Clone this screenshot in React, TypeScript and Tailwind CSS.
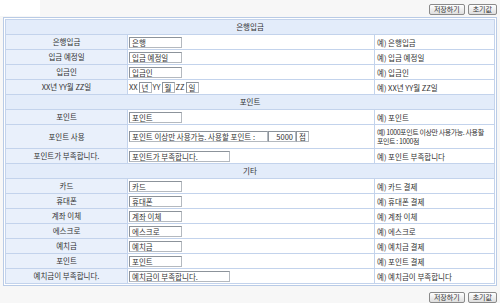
import React from "react";

const F = { fontFamily: '"Noto Sans CJK KR", "Noto Sans", sans-serif' };

function Btn({ children }: { children: React.ReactNode }) {
  return (
    <button className="h-[11px] px-[4px] border border-[#8a8a8a] rounded-[2px] bg-gradient-to-b from-[#ffffff] to-[#dedede] text-[7px] leading-[9px] text-[#333] flex items-center">
      {children}
    </button>
  );
}

function Inp({ v, w = "w-[53px]", right = false }: { v: string; w?: string; right?: boolean }) {
  return (
    <div
      className={`${w} h-[11px] border border-[#b4b9bf] border-t-[#8c939b] border-l-[#8c939b] bg-white text-[7.5px] leading-[9px] px-[2px] text-[#333] whitespace-nowrap overflow-hidden ${right ? "text-right" : ""}`}
    >
      {v}
    </div>
  );
}

type Row =
  | { kind: "h"; t: string }
  | { kind: "r"; l: string; c: React.ReactNode; e: React.ReactNode; tall?: boolean };

const rows: Row[] = [
  { kind: "h", t: "은행입금" },
  { kind: "r", l: "은행입금", c: <Inp v="은행" />, e: "예) 은행입금" },
  { kind: "r", l: "입금 예정일", c: <Inp v="입금 예정일" />, e: "예) 입금 예정일" },
  { kind: "r", l: "입금인", c: <Inp v="입금인" />, e: "예) 입금인" },
  {
    kind: "r",
    l: "XX년 YY월 ZZ일",
    c: (
      <div className="flex items-center text-[7.5px] text-[#333]">
        <span className="mr-[1px]">XX</span>
        <Inp v="년" w="w-[13px]" />
        <span className="mx-[1px]">YY</span>
        <Inp v="월" w="w-[13px]" />
        <span className="mx-[1px]">ZZ</span>
        <Inp v="일" w="w-[13px]" />
      </div>
    ),
    e: "예) XX년 YY월 ZZ일",
  },
  { kind: "h", t: "포인트" },
  { kind: "r", l: "포인트", c: <Inp v="포인트" />, e: "예) 포인트" },
  {
    kind: "r",
    l: "포인트 사용",
    tall: true,
    c: (
      <div className="flex items-center">
        <Inp v="포인트 이상만 사용가능. 사용할 포인트 :" w="w-[139px]" />
        <Inp v="5000" w="w-[28px]" right />
        <Inp v="점" w="w-[13px]" />
      </div>
    ),
    e: (
      <span className="tracking-[-0.4px] text-[7px]">
        <span className="whitespace-nowrap">예) 1000포인트 이상만 사용가능. 사용할</span>
        <br />
        포인트 : 1000점
      </span>
    ),
  },
  { kind: "r", l: "포인트가 부족합니다.", c: <Inp v="포인트가 부족합니다." w="w-[101px]" />, e: "예) 포인트 부족합니다" },
  { kind: "h", t: "기타" },
  { kind: "r", l: "카드", c: <Inp v="카드" />, e: "예) 카드 결제" },
  { kind: "r", l: "휴대폰", c: <Inp v="휴대폰" />, e: "예) 휴대폰 결제" },
  { kind: "r", l: "계좌 이체", c: <Inp v="계좌 이체" />, e: "예) 계좌 이체" },
  { kind: "r", l: "에스크로", c: <Inp v="에스크로" />, e: "예) 에스크로" },
  { kind: "r", l: "예치금", c: <Inp v="예치금" />, e: "예) 예치금 결제" },
  { kind: "r", l: "포인트", c: <Inp v="포인트" />, e: "예) 포인트 결제" },
  { kind: "r", l: "예치금이 부족합니다.", c: <Inp v="예치금이 부족합니다." w="w-[101px]" />, e: "예) 예치금이 부족합니다" },
];

export default function App() {
  return (
    <div className="w-[500px] h-[303px] bg-[#f7f7f7] relative overflow-hidden text-[#333]" style={F}>
      <div className="absolute left-0 top-0 w-[40px] h-[16px] bg-white" />
      <div className="flex justify-end gap-[3px] pr-[3px] pt-[4px] h-[17px]">
        <Btn>저장하기</Btn>
        <Btn>초기값</Btn>
      </div>
      <div className="mx-[3px] border border-[#b9cbe6] bg-white p-[1px]">
        <div className="border-l border-t border-[#c3d3ec] flex flex-col text-[7.5px] leading-[10px]">
          {rows.map((r, i) =>
            r.kind === "h" ? (
              <div key={i} className="h-[15px] flex items-center justify-center bg-[#e3ecfa] border-r border-b border-[#c3d3ec]">
                {r.t}
              </div>
            ) : (
              <div key={i} className={`flex ${r.tall ? "h-[24px]" : "h-[15px]"}`}>
                <div className="w-[122px] shrink-0 flex items-center justify-center bg-[#e9f0fb] border-r border-b border-[#c3d3ec]">
                  {r.l}
                </div>
                <div className="w-[247px] shrink-0 flex items-center pl-[1px] bg-white border-r border-b border-[#c3d3ec]">
                  {r.c}
                </div>
                <div className="flex-1 flex items-center pl-[2px] bg-white border-r border-b border-[#c3d3ec] leading-[9px]">
                  {r.e}
                </div>
              </div>
            )
          )}
        </div>
      </div>
      <div className="flex justify-end gap-[3px] pr-[3px] pt-[6px]">
        <Btn>저장하기</Btn>
        <Btn>초기값</Btn>
      </div>
    </div>
  );
}
